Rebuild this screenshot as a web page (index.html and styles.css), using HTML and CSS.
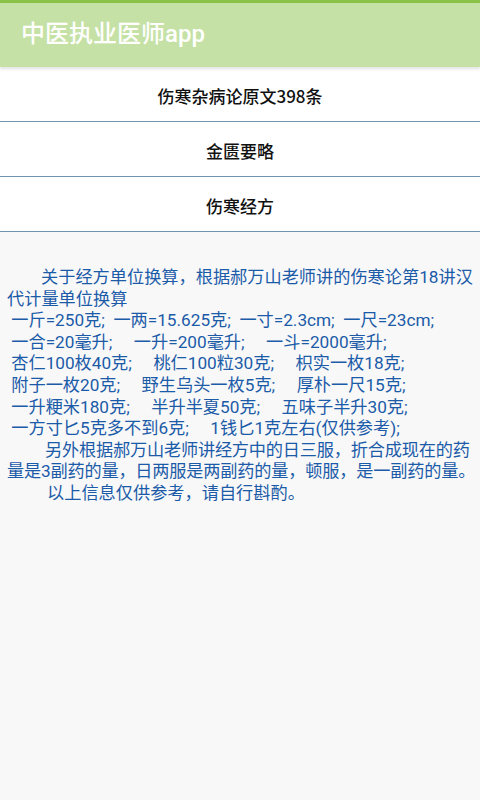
FILE: index.html
```html
<!DOCTYPE html>
<html lang="zh-CN">
<head>
<meta charset="utf-8">
<title>中医执业医师app</title>
<link rel="stylesheet" href="styles.css">
</head>
<body>
<div class="app">
  <div class="statusbar"></div>
  <header class="appbar"><h1 class="title">中医执业医师app</h1></header>
  <nav class="menu">
    <div class="menu-item">伤寒杂病论原文398条</div>
    <div class="menu-item">金匮要略</div>
    <div class="menu-item">伤寒经方</div>
  </nav>
  <main class="content">
    <p class="para indent1">关于经方单位换算，根据郝万山老师讲的伤寒论第18讲汉代计量单位换算</p>
    <p class="line"> 一斤=250克;  一两=15.625克;  一寸=2.3cm;  一尺=23cm;</p>
    <p class="line"> 一合=20毫升;　 一升=200毫升;　 一斗=2000毫升;</p>
    <p class="line"> 杏仁100枚40克;　 桃仁100粒30克;　 枳实一枚18克;</p>
    <p class="line"> 附子一枚20克;　 野生乌头一枚5克;　 厚朴一尺15克;</p>
    <p class="line"> 一升粳米180克;　 半升半夏50克;　 五味子半升30克;</p>
    <p class="line"> 一方寸匕5克多不到6克;　 1钱匕1克左右(仅供参考);</p>
    <p class="para indent2">另外根据郝万山老师讲经方中的日三服，折合成现在的药量是3副药的量，日两服是两副药的量，顿服，是一副药的量。</p>
    <p class="para indent3">以上信息仅供参考，请自行斟酌。</p>
  </main>
</div>
</body>
</html>
```

FILE: styles.css
```css
* { box-sizing: border-box; }
html, body { margin: 0; padding: 0; }
body {
  width: 480px;
  height: 800px;
  overflow: hidden;
  background: #f8f8f8;
  font-family: Roboto, "Noto Sans CJK SC", sans-serif;
}
.app {
  display: flex;
  flex-direction: column;
  height: 800px;
}
.statusbar {
  height: 3px;
  background: #8bc34a;
}
.appbar {
  height: 64px;
  background: #c5e1a5;
  display: flex;
  align-items: center;
  padding-left: 21px;
  box-shadow: 0 2px 3px rgba(0,0,0,0.12);
  position: relative;
  z-index: 1;
}
.title {
  margin: 0;
  color: #ffffff;
  font-size: 24px;
  font-weight: 500;
  line-height: 1;
  padding-bottom: 2px;
}
.menu {
  background: #ffffff;
  display: flex;
  flex-direction: column;
}
.menu-item {
  height: 55px;
  border-bottom: 1px solid #6f93ae;
  display: flex;
  align-items: center;
  justify-content: center;
  padding-top: 3px;
  font-family: "Noto Sans CJK SC", sans-serif;
  font-size: 17px;
  font-weight: 500;
  color: #111111;
}
.content {
  flex: 1;
  background: #f8f8f8;
  padding: 35px 0 0 7px;
  color: #1b5ba8;
  font-size: 17.2px;
  line-height: 21.6px;
}
.content p {
  margin: 0;
}
.line {
  white-space: pre;
}
.indent1 { text-indent: 34px; }
.indent2 { text-indent: 38px; letter-spacing: -0.2px; }
.indent3 { text-indent: 40px; }
```
